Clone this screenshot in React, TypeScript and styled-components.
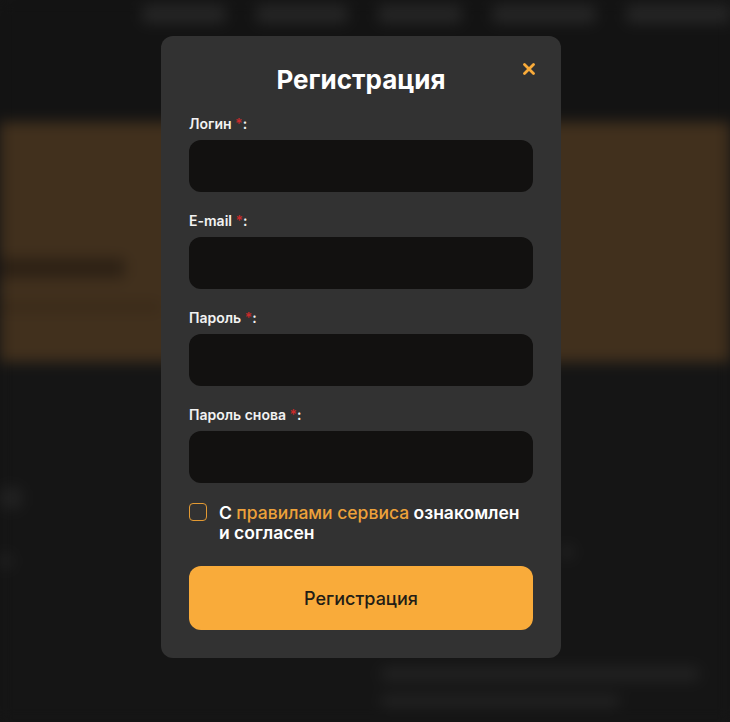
import React, { ReactElement } from "react";
import styled, { createGlobalStyle } from "styled-components";

const GlobalStyle = createGlobalStyle`
  html, body {
    margin: 0;
    padding: 0;
    background: #151515;
    font-family: Inter, "Noto Sans", "DejaVu Sans", sans-serif;
    overflow: hidden;
  }
  * {
    box-sizing: border-box;
  }
`;

/* ---------- blurred page behind the modal ---------- */

const Backdrop = styled.div`
  height: 722px;
  width: 730px;
  background: #151515;
  filter: blur(7px);
  overflow: hidden;
`;

const Header = styled.header`
  height: 122px;
  background: #131313;
  padding: 5px 0 0 142px;
`;

const Nav = styled.nav`
  display: flex;
  gap: 30px;
`;

const NavItem = styled.div<{ $w: number }>`
  width: ${(p) => p.$w}px;
  height: 18px;
  border-radius: 6px;
  background: #262626;
  flex-shrink: 0;
`;

const Banner = styled.section`
  height: 240px;
  background: #41301d;
  padding-top: 136px;
  display: flex;
  flex-direction: column;
  gap: 24px;
`;

const BannerLine = styled.div<{ $w: number; $h: number; $c: string }>`
  width: ${(p) => p.$w}px;
  height: ${(p) => p.$h}px;
  background: ${(p) => p.$c};
  border-radius: 4px;
`;

const Lower = styled.section`
  display: grid;
  grid-template-columns: 380px 1fr;
  padding-top: 125px;
  height: 360px;
`;

const LeftCol = styled.div`
  display: flex;
  flex-direction: column;
  gap: 44px;
`;

const RightCol = styled.div`
  display: flex;
  flex-direction: column;
  padding-top: 58px;
`;

const Blob = styled.div<{ $w: number; $h: number; $ml?: number }>`
  width: ${(p) => p.$w}px;
  height: ${(p) => p.$h}px;
  margin-left: ${(p) => p.$ml ?? 0}px;
  background: #222222;
  border-radius: 8px;
`;

const FooterLines = styled.div`
  margin-top: 108px;
  display: flex;
  flex-direction: column;
  gap: 14px;
`;

/* ---------- modal ---------- */

const Overlay = styled.div`
  position: fixed;
  inset: 0;
  display: flex;
  justify-content: center;
  align-items: flex-start;
  padding: 36px 8px 0 0;
`;

const Modal = styled.div`
  position: relative;
  width: 400px;
  background: #323232;
  border-radius: 12px;
  padding: 27px 28px 28px;
`;

const Title = styled.h2`
  margin: 0 0 19px;
  text-align: center;
  color: #ffffff;
  font-size: 26px;
  line-height: 33px;
  font-weight: 700;
`;

const CloseButton = styled.button`
  position: absolute;
  top: 26px;
  right: 25px;
  width: 14px;
  height: 14px;
  padding: 0;
  border: none;
  background: none;
  cursor: pointer;
  display: flex;
  align-items: center;
  justify-content: center;
`;

const Form = styled.form`
  display: flex;
  flex-direction: column;
`;

const Field = styled.div`
  display: flex;
  flex-direction: column;
  margin-bottom: 20px;
`;

const Label = styled.label`
  color: #f2f2f2;
  font-size: 14px;
  line-height: 17px;
  font-weight: 600;
  margin-bottom: 8px;
`;

const Required = styled.span`
  color: #c92a2a;
`;

const Input = styled.input`
  height: 52px;
  width: 100%;
  border: none;
  border-radius: 12px;
  background: #121110;
  color: #fff;
  padding: 0 16px;
  font-family: inherit;
  font-size: 16px;
  :focus {
    outline: none;
  }
`;

const AgreeRow = styled.label`
  display: flex;
  align-items: flex-start;
  gap: 12px;
  margin-bottom: 23px;
  cursor: pointer;
`;

const CheckBox = styled.span`
  width: 18px;
  height: 18px;
  flex-shrink: 0;
  border: 1.5px solid #e39a33;
  border-radius: 4px;
`;

const AgreeText = styled.span`
  max-width: 308px;
  color: #ffffff;
  font-size: 17.5px;
  line-height: 20px;
  font-weight: 600;
`;

const RulesLink = styled.a`
  color: #eda13a;
  font-weight: 500;
  text-decoration: none;
`;

const Submit = styled.button`
  height: 64px;
  width: 100%;
  border: none;
  border-radius: 12px;
  background: #f9ab3a;
  color: #231d16;
  font-family: inherit;
  font-size: 18px;
  font-weight: 500;
  cursor: pointer;
`;

const fields = [
  { id: "login", label: "Логин", type: "text" },
  { id: "email", label: "E-mail", type: "email" },
  { id: "password", label: "Пароль", type: "password" },
  { id: "password2", label: "Пароль снова", type: "password" },
];

const App = (): ReactElement => {
  return (
    <>
      <GlobalStyle />
      <Backdrop>
        <Header>
          <Nav>
            {[84, 92, 84, 104, 110].map((w, i) => (
              <NavItem key={i} $w={w} />
            ))}
          </Nav>
        </Header>
        <Banner>
          <BannerLine $w={125} $h={20} $c="#2d2115" />
          <BannerLine $w={160} $h={10} $c="#3a2a19" />
        </Banner>
        <Lower>
          <LeftCol>
            <Blob $w={22} $h={22} />
            <Blob $w={12} $h={16} />
          </LeftCol>
          <RightCol>
            <Blob $w={14} $h={14} $ml={180} />
            <FooterLines>
              <Blob $w={320} $h={14} />
              <Blob $w={240} $h={12} />
            </FooterLines>
          </RightCol>
        </Lower>
      </Backdrop>

      <Overlay>
        <Modal>
          <CloseButton aria-label="Закрыть">
            <svg width="12" height="12" viewBox="0 0 12 12">
              <path
                d="M1.5 1.5 L10.5 10.5 M10.5 1.5 L1.5 10.5"
                stroke="#f9ab3a"
                strokeWidth="2.8"
                strokeLinecap="round"
              />
            </svg>
          </CloseButton>
          <Title>Регистрация</Title>
          <Form onSubmit={(e) => e.preventDefault()}>
            {fields.map((f) => (
              <Field key={f.id}>
                <Label htmlFor={f.id}>
                  {f.label} <Required>*</Required>:
                </Label>
                <Input id={f.id} type={f.type} />
              </Field>
            ))}
            <AgreeRow>
              <CheckBox />
              <AgreeText>
                С <RulesLink href="#">правилами сервиса</RulesLink> ознакомлен
                и согласен
              </AgreeText>
            </AgreeRow>
            <Submit type="submit">Регистрация</Submit>
          </Form>
        </Modal>
      </Overlay>
    </>
  );
};

export default App;
